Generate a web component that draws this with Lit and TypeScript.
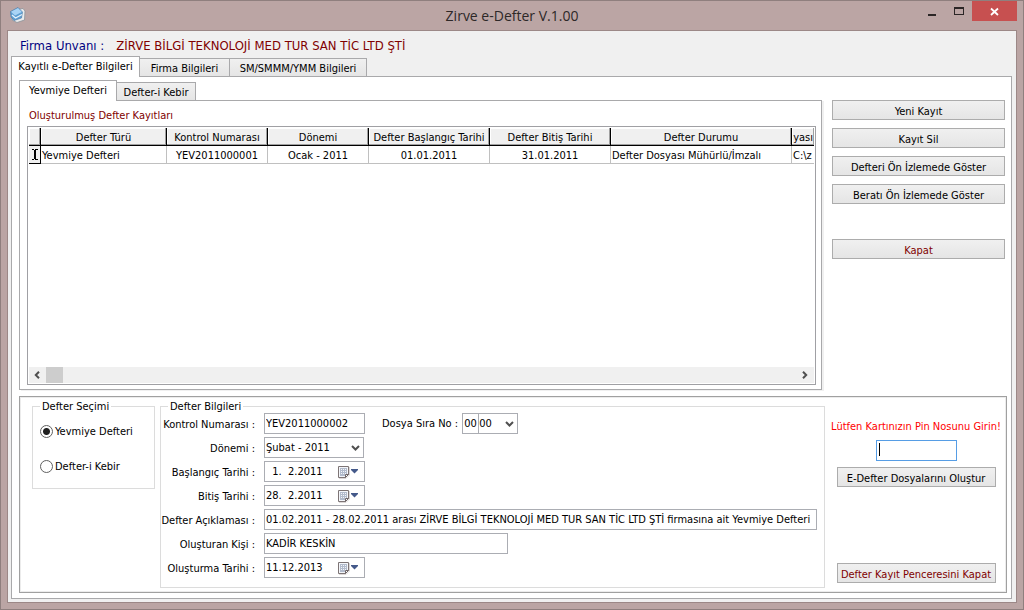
import { LitElement, html, css, svg } from "lit";
import { customElement, state } from "lit/decorators.js";

interface Column {
  title: string;
  value: string;
  width: string;
  align: string;
}

const columns: Column[] = [
  { title: "Defter Türü", value: "Yevmiye Defteri", width: "w-type", align: "left" },
  { title: "Kontrol Numarası", value: "YEV2011000001", width: "w-small", align: "center" },
  { title: "Dönemi", value: "Ocak - 2011", width: "w-small", align: "center" },
  { title: "Defter Başlangıç Tarihi", value: "01.01.2011", width: "w-date", align: "center" },
  { title: "Defter Bitiş Tarihi", value: "31.01.2011", width: "w-date", align: "center" },
  { title: "Defter Durumu", value: "Defter Dosyası Mühürlü/İmzalı", width: "w-status", align: "left" },
  { title: "Dosyası", value: "C:\\z", width: "w-rest", align: "left" },
];

const chevron = html`<svg class="chevron" width="9" height="6" viewBox="0 0 9 6" aria-hidden="true">
  ${svg`<path d="M1 1 L4.5 4.5 L8 1" fill="none" stroke="#505050" stroke-width="2"/>`}
</svg>`;

const calendar = html`<svg width="22" height="14" viewBox="0 0 22 14" aria-hidden="true">
  ${svg`
    <path d="M2 13.5 H9 L12.5 10 V2" fill="none" stroke="#dcd8d8"/>
    <path d="M1.5 1.5 H11.5 V9.5 L8.5 12.5 H1.5 Z" fill="#f4f6fa" stroke="#7d7475"/>
    <path d="M3 3 H10 V9 H8 V11 H3 Z" fill="#b2bbcc"/>
    <path d="M4 4.5 h1 m1 0 h1 m1 0 h1 M4 6.500 h1 m1 0 h1 m1 0 h1 M4 8.500 h1 m1 0 h1 m1 0 h1" stroke="#f4f6fa"/>
    <path d="M8.5 12.5 V9.5 H11.5 Z" fill="#fff" stroke="#6f6667"/>
    <path d="M14 4 H21 V5 L17.5 8.500 L14 5 Z" fill="#44598a"/>`}
</svg>`;

@customElement("app-root")
export class AppRoot extends LitElement {
  @state() private kind = "yevmiye";

  static styles = css`
    :host {
      display: block;
      font-family: "DejaVu Sans Condensed", "DejaVu Sans", sans-serif;
      font-size: 11px;
      line-height: 13px;
      color: #000;
    }
    * { box-sizing: border-box; }
    button, input, select { font: inherit; color: inherit; margin: 0; border-radius: 0; }
    .window {
      min-height: 100vh;
      display: flex;
      flex-direction: column;
      padding: 0 6px 6px;
      border: 1px solid #8f7f7e;
      background: #bba5a4;
    }
    .titlebar {
      display: grid;
      grid-template-columns: 120px 1fr 120px;
      height: 29px;
    }
    .logo { margin: 5px 0 0 2px; }
    .title {
      margin: 0;
      font: 400 14px/29px "Open Sans", "Noto Sans", sans-serif;
      color: #2d2828;
      text-align: center;
    }
    .controls { display: flex; justify-content: flex-end; align-items: flex-start; }
    .control {
      display: grid;
      place-items: center;
      width: 27px;
      height: 20px;
      padding: 0;
      border: 0;
      background: none;
    }
    .close { width: 45px; background: #c75050; }
    .client {
      flex: 1;
      display: flex;
      flex-direction: column;
      padding: 0 4px 3px 3px;
      border: 1px solid #9c8887;
      background: #f0f0f0;
    }
    .firm {
      display: flex;
      gap: 12px;
      height: 25px;
      padding: 6px 9px 0;
      font-size: 13px;
      line-height: 17px;
      color: #000080;
    }
    .firm-name { color: #800000; }
    .tabs { display: flex; align-items: flex-end; height: 20px; }
    .tab {
      height: 18px;
      padding: 2px 0 0;
      border: 1px solid #a9a9ab;
      border-bottom: 0;
      margin-left: -1px;
      background: linear-gradient(#f0f0f0, #e5e5e5);
      text-align: center;
      white-space: nowrap;
    }
    .tab.active {
      z-index: 1;
      height: 21px;
      padding: 0 0 2px;
      margin: 0 0 -1px;
      background: #fff;
    }
    .t-129 { width: 129px; }
    .t-91 { width: 91px; }
    .t-138 { width: 138px; }
    .t-98 { width: 98px; }
    .t-80 { width: 80px; }
    .page {
      flex: 1;
      display: flex;
      flex-direction: column;
      gap: 6px;
      padding: 3px 4px 5px 7px;
      border: 1px solid #a9a9ab;
      background: #fff;
    }
    .upper {
      flex: 1;
      display: grid;
      grid-template-columns: minmax(0, 1fr) 173px;
      gap: 10px;
      padding-right: 2px;
    }
    .books { display: flex; flex-direction: column; min-width: 0; }
    .sheet {
      flex: 1;
      display: flex;
      flex-direction: column;
      min-width: 0;
      padding: 8px 5px 4px 7px;
      border: 1px solid #a9a9ab;
      box-shadow: 2px 1px #f0f0f0;
      background: #fff;
    }
    .caption { margin: 0 0 4px 2px; font-size: 11px; font-weight: 400; color: #800000; }
    .grid {
      flex: 1;
      display: flex;
      flex-direction: column;
      justify-content: space-between;
      min-width: 0;
      padding: 1px;
      border: 1px solid #a0a0a4;
    }
    .table { width: 100%; table-layout: fixed; border-spacing: 0; }
    .table th, .table td {
      height: 18px;
      padding: 2px 1px 0;
      overflow: hidden;
      font-weight: 400;
      white-space: nowrap;
    }
    .table th {
      background: #f0f0f0;
      border-right: 1px solid #000;
      border-bottom: 1px solid #000;
      box-shadow: inset -1px -1px #a0a0a0, inset 1px 1px #fff;
    }
    .table td { border-right: 1px solid #c0c0c0; border-bottom: 1px solid #c0c0c0; }
    .table th:last-child, .table td:last-child { border-right: 0; }
    .clip { display: flex; justify-content: center; overflow: hidden; }
    .table th:last-child .clip { justify-content: flex-end; }
    .table td.marker {
      padding: 0;
      background: #f0f0f0;
      border-color: #000;
      line-height: 0;
    }
    .left { text-align: left; }
    .center { text-align: center; }
    .w-mark { width: 12px; }
    .w-type { width: 126px; }
    .w-small { width: 101px; }
    .w-date { width: 121px; }
    .w-status { width: 181px; }
    .scroll { display: flex; height: 16px; background: #f0f0f0; }
    .arrow {
      display: grid;
      place-items: center;
      width: 17px;
      padding: 0 1px 1px 0;
      border: 0;
      background: none;
    }
    .track { flex: 1; display: flex; }
    .thumb { width: 17px; background: #cdcdcd; }
    .actions { display: flex; flex-direction: column; gap: 8px; padding-top: 20px; }
    .btn {
      height: 20px;
      padding: 2px 0 0;
      border: 1px solid #acacac;
      background: linear-gradient(#f0f0f0, #e5e5e5);
      text-align: center;
      white-space: nowrap;
    }
    .maroon { color: #800000; }
    .actions .maroon { margin-top: 27px; }
    .entry {
      display: grid;
      grid-template-columns: 123px minmax(0, 1fr) 181px;
      padding: 3px 0 4px 12px;
      border: 1px solid #a0a0a0;
      box-shadow: inset 1px 1px #ececec, inset -1px -1px #ececec;
    }
    .group { min-width: 0; margin: 0; padding: 0; border: 1px solid #dcdcdc; }
    .group legend { margin-left: 7px; padding: 0 2px; line-height: 13px; }
    .choice { align-self: start; height: 89px; }
    .options { display: flex; flex-direction: column; gap: 22px; padding: 12px 7px 0; }
    .option { display: flex; align-items: center; gap: 2px; }
    .option input {
      appearance: none;
      width: 13px;
      height: 13px;
      border: 1px solid #606060;
      border-radius: 50%;
      background: #fff;
    }
    .option input:checked { background: radial-gradient(circle, #202020 3px, #fff 4px); }
    .details { margin-left: 5px; }
    .form {
      display: grid;
      grid-template-columns: 95px minmax(0, 1fr);
      gap: 3px 8px;
      align-items: center;
      padding: 0 7px 9px 0;
    }
    .form > label { padding: 1px 1px 0 0; text-align: right; white-space: nowrap; }
    .line { display: flex; align-items: center; }
    .box {
      height: 21px;
      padding: 0 1px 1px;
      border: 1px solid #abadb3;
      background: #fff;
      outline: 0;
    }
    .w-101 { width: 101px; }
    .w-244 { width: 244px; }
    .wide { width: 100%; }
    .combo { display: grid; width: 100px; align-items: center; }
    .combo > * { grid-area: 1 / 1; }
    .combo select { appearance: none; width: 100%; }
    .chevron { justify-self: end; margin-right: 4px; pointer-events: none; }
    .file-label { margin: 0 4px 0 17px; white-space: nowrap; }
    .file { width: 16px; border-right: 0; }
    .file-combo { width: 40px; }
    .file-combo select { padding-left: 0; }
    .date { display: flex; align-items: center; padding: 0; }
    .date input { flex: 1; min-width: 0; padding: 0 1px; border: 0; outline: 0; background: none; }
    .date button {
      display: grid;
      padding: 0;
      margin-right: 5px;
      border: 0;
      background: none;
    }
    .signing { display: flex; flex-direction: column; align-items: center; padding: 20px 0 5px 1px; }
    .signing label { color: #f00; white-space: nowrap; }
    .pin { position: relative; display: flex; margin: 7px 0 6px; }
    .pin input { width: 81px; border-color: #569de5; }
    .caret { position: absolute; left: 3px; top: 3px; width: 1px; height: 13px; background: #000; }
    .signing .btn { width: 159px; }
    .signing .maroon { margin-top: auto; }
  `;

  private dateBox(id: string, value: string) {
    return html`<div class="box date w-101">
      <input id=${id} type="text" .value=${value} />
      <button type="button" aria-label="Takvim">${calendar}</button>
    </div>`;
  }

  private option(id: string, text: string) {
    return html`<label class="option">
      <input type="radio" name="kind" .checked=${this.kind === id} @change=${() => (this.kind = id)} />${text}
    </label>`;
  }

  render() {
    return html`
      <div class="window">
        <header class="titlebar">
          <svg class="logo" width="18" height="18" viewBox="0 0 18 18" aria-hidden="true">
            <path d="M6 4 L14 2.500 L16 5 L15.500 14 L8 16.500 L3 14 Z" fill="#e9ebec" stroke="#8c9298" stroke-width="0.8" />
            <path d="M1.500 5.500 L9 1.500 L13.500 6 L12.500 12 L5 14.500 L2 11 Z" fill="#5f9fd2" stroke="#4779a6" stroke-width="0.6" />
            <path d="M2 5.800 L9 2 L12.800 6 L6 9.500 Z" fill="#a9d4f5" />
            <path d="M3 9 L6.500 12 L13 8.500" fill="none" stroke="#e5f2fb" stroke-width="1.300" />
          </svg>
          <h1 class="title">Zirve e-Defter V.1.00</h1>
          <div class="controls">
            <button class="control" type="button" aria-label="Simge durumuna küçült">
              <svg width="10" height="10" viewBox="0 0 10 10"><rect x="1" y="8" width="8" height="2" fill="#2b2626" /></svg>
            </button>
            <button class="control" type="button" aria-label="Ekranı kapla">
              <svg width="10" height="10" viewBox="0 0 10 10"><path d="M0 1 H10 V9 H0 Z M1 3 V8 H9 V3 Z" fill="#2b2626" fill-rule="evenodd" /></svg>
            </button>
            <button class="control close" type="button" aria-label="Kapat">
              <svg width="9" height="9" viewBox="0 0 9 9"><path d="M1 1.500 L8 8 M8 1.500 L1 8" stroke="#fff" stroke-width="1.800" /></svg>
            </button>
          </div>
        </header>
        <main class="client">
          <div class="firm"><span>Firma Unvanı :</span><span class="firm-name">ZİRVE BİLGİ TEKNOLOJİ MED TUR SAN TİC LTD ŞTİ</span></div>
          <nav class="tabs" role="tablist">
            <button class="tab active t-129" role="tab" aria-selected="true">Kayıtlı e-Defter Bilgileri</button>
            <button class="tab t-91" role="tab">Firma Bilgileri</button>
            <button class="tab t-138" role="tab">SM/SMMM/YMM Bilgileri</button>
          </nav>
          <div class="page">
            <section class="upper">
              <div class="books">
                <nav class="tabs" role="tablist">
                  <button class="tab active t-98" role="tab" aria-selected="true">Yevmiye Defteri</button>
                  <button class="tab t-80" role="tab">Defter-i Kebir</button>
                </nav>
                <div class="sheet">
                  <h2 class="caption">Oluşturulmuş Defter Kayıtları</h2>
                  <div class="grid">
                    <table class="table">
                      <colgroup>
                        <col class="w-mark" />
                        ${columns.map((c) => html`<col class=${c.width} />`)}
                      </colgroup>
                      <thead>
                        <tr><th></th>${columns.map((c) => html`<th scope="col"><div class="clip">${c.title}</div></th>`)}</tr>
                      </thead>
                      <tbody>
                        <tr>
                          <td class="marker">
                            <svg width="11" height="15" viewBox="0 0 11 15"><path d="M3 2 H5 V3 H6 V2 H9 V3 H7 V12 H9 V13 H6 V12 H5 V13 H3 V12 H5 V3 H3 Z" fill="#000" /></svg>
                          </td>
                          ${columns.map((c) => html`<td class=${c.align}>${c.value}</td>`)}
                        </tr>
                      </tbody>
                    </table>
                    <div class="scroll">
                      <button class="arrow" type="button" aria-label="Sola kaydır">
                        <svg width="6" height="8" viewBox="0 0 6 8"><path d="M5 0.800 L1.800 4 L5 7.200" fill="none" stroke="#505050" stroke-width="2" /></svg>
                      </button>
                      <div class="track"><div class="thumb"></div></div>
                      <button class="arrow" type="button" aria-label="Sağa kaydır">
                        <svg width="6" height="8" viewBox="0 0 6 8"><path d="M1 0.800 L4.200 4 L1 7.200" fill="none" stroke="#505050" stroke-width="2" /></svg>
                      </button>
                    </div>
                  </div>
                </div>
              </div>
              <div class="actions">
                <button class="btn" type="button">Yeni Kayıt</button>
                <button class="btn" type="button">Kayıt Sil</button>
                <button class="btn" type="button">Defteri Ön İzlemede Göster</button>
                <button class="btn" type="button">Beratı Ön İzlemede Göster</button>
                <button class="btn maroon" type="button">Kapat</button>
              </div>
            </section>
            <section class="entry">
              <fieldset class="group choice">
                <legend>Defter Seçimi</legend>
                <div class="options">
                  ${this.option("yevmiye", "Yevmiye Defteri")}
                  ${this.option("kebir", "Defter-i Kebir")}
                </div>
              </fieldset>
              <fieldset class="group details">
                <legend>Defter Bilgileri</legend>
                <div class="form">
                  <label for="number">Kontrol Numarası :</label>
                  <div class="line">
                    <input class="box w-101" id="number" type="text" value="YEV2011000002" />
                    <label class="file-label" for="file">Dosya Sıra No :</label>
                    <input class="box file" id="file" type="text" value="00" />
                    <div class="combo file-combo">
                      <select class="box" aria-label="Dosya Sıra No"><option>00</option></select>
                      ${chevron}
                    </div>
                  </div>
                  <label for="period">Dönemi :</label>
                  <div class="combo">
                    <select class="box" id="period"><option>Şubat - 2011</option></select>
                    ${chevron}
                  </div>
                  <label for="start">Başlangıç Tarihi :</label>
                  ${this.dateBox("start", "\u00a0\u00a01.\u00a0\u00a02.2011")}
                  <label for="end">Bitiş Tarihi :</label>
                  ${this.dateBox("end", "28.\u00a0\u00a02.2011")}
                  <label for="note">Defter Açıklaması :</label>
                  <input class="box wide" id="note" type="text" value="01.02.2011 - 28.02.2011 arası ZİRVE BİLGİ TEKNOLOJİ MED TUR SAN TİC LTD ŞTİ firmasına ait Yevmiye Defteri" />
                  <label for="author">Oluşturan Kişi :</label>
                  <input class="box w-244" id="author" type="text" value="KADİR KESKİN" />
                  <label for="created">Oluşturma Tarihi :</label>
                  ${this.dateBox("created", "11.12.2013")}
                </div>
              </fieldset>
              <div class="signing">
                <label for="pin">Lütfen Kartınızın Pin Nosunu Girin!</label>
                <div class="pin"><input class="box" id="pin" type="password" /><span class="caret"></span></div>
                <button class="btn" type="button">E-Defter Dosyalarını Oluştur</button>
                <button class="btn maroon" type="button">Defter Kayıt Penceresini Kapat</button>
              </div>
            </section>
          </div>
        </main>
      </div>
    `;
  }
}
